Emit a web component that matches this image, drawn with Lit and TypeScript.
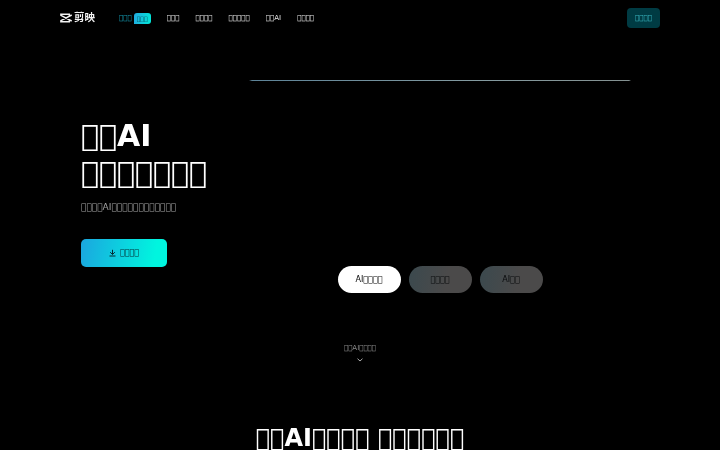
import { LitElement, html, css } from "lit";
import { customElement } from "lit/decorators.js";
import { classMap } from "lit/directives/class-map.js";

// Characters without a glyph, shown as the font's empty box.
const box = (count: number) => "\uE000".repeat(count);

const NAV = [box(3), box(4), box(5), `${box(2)}AI`, box(4)];
const TABS = [`AI${box(4)}`, box(4), `AI${box(2)}`];

@customElement("site-header")
export class SiteHeader extends LitElement {
  static styles = css`
    :host {
      align-items: center;
      box-sizing: border-box;
      color: #e6e6e6;
      display: flex;
      flex: none;
      font-size: 7px;
      height: 36px;
      line-height: 10px;
      padding: 0 60px;
      white-space: nowrap;
      will-change: transform;
    }

    .logo {
      align-items: center;
      color: #f2f2f2;
      display: flex;
      font: 700 10.5px/12px "Noto Sans CJK SC", sans-serif;
      gap: 2px;
      width: 59px;
    }

    .logo svg {
      display: block;
    }

    .logo span {
      margin-top: -2px;
    }

    .nav {
      align-items: center;
      display: flex;
      flex: 1;
      gap: 16.2px;
    }

    .current {
      align-items: center;
      color: #159db5;
      display: flex;
      gap: 2px;
    }

    .badge {
      background: linear-gradient(100deg, #21a9df, #00ead9);
      border-radius: 3px 3px 3px 0;
      color: #053b49;
      font-size: 6px;
      line-height: 11px;
      text-align: center;
      width: 17px;
    }

    .login {
      background: #003b43;
      border-radius: 4px;
      color: #39b8c3;
      line-height: 20px;
      text-align: center;
      width: 33px;
    }
  `;

  render() {
    return html`
      <div class="logo">
        <svg width="12" height="10" viewBox="0 0 12 10" fill="none" stroke="#f2f2f2">
          <path
            d="M11.7 2 L.9 7.6 V8.8 H9.3 V7.4 M11.7 8 L.9 2.4 V1.2 H9.3 V2.6"
            stroke-width="1.5"
          />
        </svg>
        <span>剪映</span>
      </div>
      <div class="nav">
        <div class="current">
          <span>${box(3)}</span>
          <span class="badge">${box(3)}</span>
        </div>
        ${NAV.map((label) => html`<span>${label}</span>`)}
      </div>
      <div class="login">${box(4)}</div>
    `;
  }
}

@customElement("hero-tabs")
export class HeroTabs extends LitElement {
  static styles = css`
    :host {
      display: flex;
      gap: 8px;
      justify-content: center;
      will-change: transform;
    }

    .tab {
      background: linear-gradient(100deg, #3b494e, #4b4a4a 60%);
      border-radius: 14px;
      box-sizing: border-box;
      color: #080a0b;
      font-size: 8px;
      height: 26.5px;
      line-height: 26px;
      padding-top: 1px;
      text-align: center;
      width: 63px;
    }

    .active {
      background: #fff;
      color: #000;
    }
  `;

  render() {
    return TABS.map(
      (label, i) =>
        html`<div class=${classMap({ tab: true, active: i === 0 })}>${label}</div>`
    );
  }
}

@customElement("app-root")
export class AppRoot extends LitElement {
  static styles = css`
    :host {
      background: #000;
      color: #fff;
      display: flex;
      flex-direction: column;
      font-family: "DejaVu Sans", sans-serif;
      height: 450px;
      overflow: hidden;
      width: 720px;
    }

    .hero {
      display: grid;
      flex: none;
      grid-template-columns: 168px 382px;
      height: 307px;
      padding: 0 81px;
      white-space: nowrap;
    }

    .intro {
      padding-top: 82px;
      will-change: transform;
    }

    .title {
      font-size: 30px;
      line-height: 36.5px;
      margin: 0;
    }

    .subtitle {
      color: #a3a3a3;
      font-size: 9px;
      line-height: 14px;
      margin: 9px 0 25px;
    }

    .download {
      align-items: center;
      background: linear-gradient(100deg, #1ba6df, #00f5df 85%);
      border-radius: 5px;
      color: #042a30;
      display: flex;
      font-size: 8px;
      gap: 4px;
      height: 27.5px;
      justify-content: center;
      width: 86px;
    }

    .preview {
      display: grid;
      grid-template-rows: 1px auto;
      height: 212.5px;
      margin-top: 44px;
    }

    .edge {
      background: linear-gradient(
        90deg,
        transparent,
        #5d8398 3px,
        #849ba0 60%,
        #849191 380px,
        transparent
      );
    }

    .preview hero-tabs {
      align-self: end;
    }

    .more {
      align-items: center;
      color: #8c8c8c;
      display: flex;
      flex: none;
      flex-direction: column;
      font-size: 7px;
      gap: 5px;
      line-height: 10px;
      will-change: transform;
    }

    .section-title {
      flex: none;
      font-size: 24px;
      line-height: 30px;
      margin: 61px 0 0;
      text-align: center;
      will-change: transform;
    }
  `;

  render() {
    return html`
      <site-header></site-header>
      <div class="hero">
        <div class="intro">
          <h1 class="title">${box(2)}AI<br />${box(7)}</h1>
          <p class="subtitle">${box(4)}AI${box(12)}</p>
          <div class="download">
            <svg width="7" height="8" viewBox="0 0 7 8" fill="none" stroke="currentColor">
              <path d="M3.5 .8 V5.3 M1.2 3.2 L3.5 5.5 L5.8 3.2 M.5 7 H6.5" />
            </svg>
            <span>${box(4)}</span>
          </div>
        </div>
        <div class="preview">
          <div class="edge"></div>
          <hero-tabs></hero-tabs>
        </div>
      </div>
      <div class="more">
        <span>${box(2)}AI${box(4)}</span>
        <svg width="6" height="4" viewBox="0 0 6 4" fill="none" stroke="#aaa">
          <path d="M.5 .7 L3 3 L5.5 .7" />
        </svg>
      </div>
      <h2 class="section-title">${box(2)}AI${box(4)} ${box(6)}</h2>
    `;
  }
}
